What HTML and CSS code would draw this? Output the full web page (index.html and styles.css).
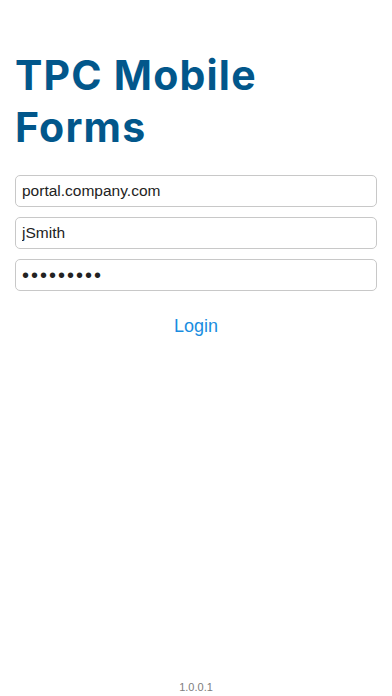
FILE: index.html
```html
<!DOCTYPE html>
<html lang="en">
<head>
	<meta charset="UTF-8">
	<title>TPC Mobile Forms</title>
	<link rel="stylesheet" href="styles.css">
</head>
<body>
	<main class="login">
		<h1 class="title">TPC Mobile Forms</h1>
		<form class="fields">
			<input type="text" class="field" value="portal.company.com">
			<input type="text" class="field" value="jSmith">
			<input type="password" class="field pass" value="123456789">
			<button type="button" class="btn-login">Login</button>
		</form>
	</main>
	<footer class="version">1.0.0.1</footer>
</body>
</html>
```

FILE: styles.css
```css
html, body {
	height: 100%;
}
body {
	margin: 0;
	background-color: #fff;
	font-family: "Liberation Sans", Arial, sans-serif;
	display: flex;
	flex-direction: column;
}
.login {
	flex: 1;
	padding: 0 15px;
}
.title {
	margin: 49px 0 0 0;
	width: 270px;
	font-family: Inter, "Liberation Sans", sans-serif;
	font-size: 41px;
	line-height: 52px;
	letter-spacing: 1.2px;
	font-weight: bold;
	color: #02578b;
}
.fields {
	display: flex;
	flex-direction: column;
	gap: 10px;
	margin-top: 22px;
}
.field {
	box-sizing: border-box;
	height: 32px;
	width: 100%;
	margin: 0;
	padding: 0 6px;
	border: 1px solid #c8c8c8;
	border-radius: 5px;
	font-family: "Liberation Sans", Arial, sans-serif;
	font-size: 15.5px;
	color: #222;
	outline: none;
}
.field.pass {
	font-size: 20px;
	letter-spacing: 2px;
}
.btn-login {
	align-self: center;
	margin-top: 15px;
	background: none;
	border: none;
	padding: 0;
	font-family: "Liberation Sans", Arial, sans-serif;
	font-size: 18px;
	color: #1a8de0;
	cursor: pointer;
}
.version {
	text-align: center;
	font-size: 11px;
	color: #7d7d7d;
	padding-bottom: 3px;
}
```
